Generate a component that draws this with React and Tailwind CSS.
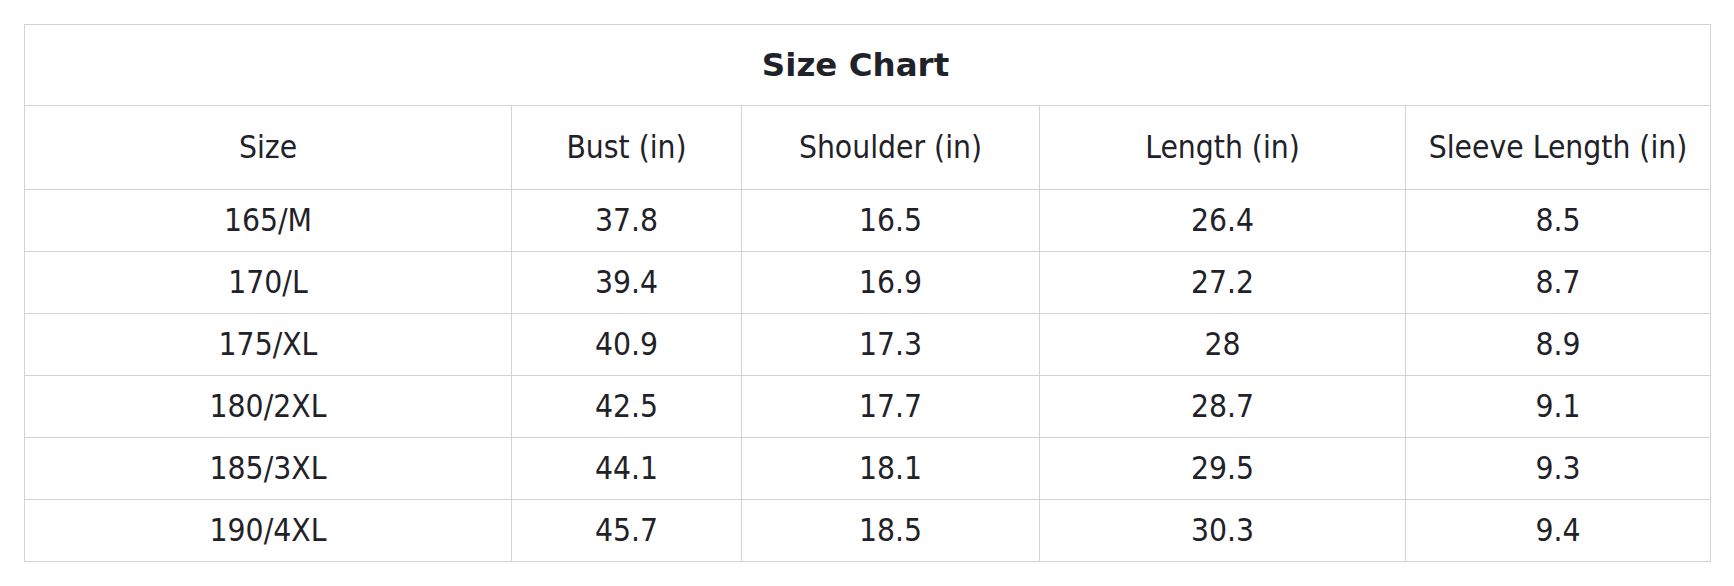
import React from "react";

const rows = [
  ["165/M", "37.8", "16.5", "26.4", "8.5"],
  ["170/L", "39.4", "16.9", "27.2", "8.7"],
  ["175/XL", "40.9", "17.3", "28", "8.9"],
  ["180/2XL", "42.5", "17.7", "28.7", "9.1"],
  ["185/3XL", "44.1", "18.1", "29.5", "9.3"],
  ["190/4XL", "45.7", "18.5", "30.3", "9.4"],
];

const headers = ["Size", "Bust (in)", "Shoulder (in)", "Length (in)", "Sleeve Length (in)"];

export default function App() {
  return (
    <div className="bg-white w-[1734px] h-[586px] pt-6 pl-6 font-['DejaVu_Sans_Condensed','DejaVu_Sans',sans-serif] text-[#1f2228]">
      <table className="border-collapse w-[1686px] table-fixed">
        <colgroup>
          <col className="w-[487px]" />
          <col className="w-[230px]" />
          <col className="w-[298px]" />
          <col className="w-[366px]" />
          <col className="w-[305px]" />
        </colgroup>
        <thead>
          <tr className="h-[81px]">
            <th
              colSpan={5}
              className="border border-[#d3d3d3] pr-6 text-center align-middle font-['DejaVu_Sans',sans-serif] font-bold text-[32.5px]"
            >
              Size Chart
            </th>
          </tr>
          <tr className="h-[84px]">
            {headers.map((h) => (
              <td key={h} className="border border-[#d3d3d3] text-center align-middle text-[31.5px] font-normal">
                {h}
              </td>
            ))}
          </tr>
        </thead>
        <tbody>
          {rows.map((r) => (
            <tr key={r[0]} className="h-[62px]">
              {r.map((c, i) => (
                <td key={i} className="border border-[#d3d3d3] text-center align-middle text-[31.5px]">
                  {c}
                </td>
              ))}
            </tr>
          ))}
        </tbody>
      </table>
    </div>
  );
}
